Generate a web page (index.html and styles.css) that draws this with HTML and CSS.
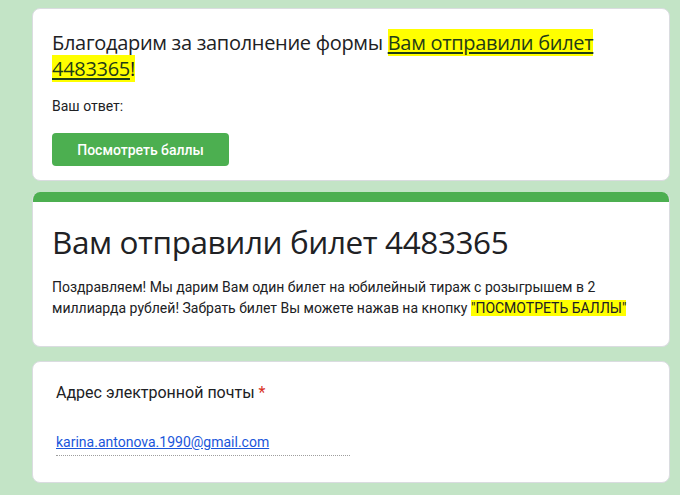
FILE: index.html
```html
<!DOCTYPE html>
<html lang="ru">
<head>
<meta charset="utf-8">
<link rel="stylesheet" href="styles.css">
</head>
<body>
<div class="page">
  <div class="card card-thanks">
    <div class="thanks-title">Благодарим за заполнение формы <a class="mark link">Вам отправили билет </a><br><span class="mark"><a class="link">4483365</a>!</span></div>
    <div class="answer-label">Ваш ответ:</div>
    <button class="btn">Посмотреть баллы</button>
  </div>
  <div class="card card-head">
    <div class="head-bar"></div>
    <div class="head-body">
      <h1 class="form-title">Вам отправили билет 4483365</h1>
      <p class="form-desc">Поздравляем! Мы дарим Вам один билет на юбилейный тираж с розыгрышем в 2 миллиарда рублей! Забрать билет Вы можете нажав на кнопку <span class="mark">"ПОСМОТРЕТЬ БАЛЛЫ"</span></p>
    </div>
  </div>
  <div class="card card-question">
    <div class="q-label">Адрес электронной почты <span class="req">*</span></div>
    <div class="q-answer"><a class="email">karina.antonova.1990@gmail.com</a></div>
  </div>
</div>
</body>
</html>
```

FILE: styles.css
```css
html, body {
  margin: 0;
  padding: 0;
  background: #c3e4c6;
}
body {
  font-family: Roboto, "Liberation Sans", sans-serif;
  color: #202124;
  width: 680px;
  height: 495px;
  overflow: hidden;
}
.page {
  padding: 8px 10px 0 32px;
  display: flex;
  flex-direction: column;
}
.card {
  background: #fff;
  border: 1px solid #dadce0;
  border-radius: 8px;
  overflow: hidden;
}
.card-thanks {
  height: 171px;
  padding: 0 19px;
}
.thanks-title {
  font-family: "Open Sans", Roboto, sans-serif;
  font-size: 20px;
  line-height: 26px;
  margin-top: 21px;
  letter-spacing: -0.3px;
}
.mark {
  background: #ffff00;
}
.link {
  color: #1f3d17;
  text-decoration: underline;
  text-decoration-thickness: 2px;
  text-underline-offset: 2px;
}
.answer-label {
  font-size: 14px;
  line-height: 20px;
  margin-top: 14px;
}
.btn {
  margin-top: 17px;
  width: 177px;
  height: 33px;
  background: #4caf50;
  color: #fff;
  border: none;
  border-radius: 4px;
  font-family: Roboto, sans-serif;
  font-weight: 500;
  font-size: 14px;
  display: block;
}
.card-head {
  margin-top: 11px;
  height: 154px;
  border-top: none;
}
.head-bar {
  height: 10px;
  background: #4caf50;
}
.head-body {
  padding: 0 19px;
}
.form-title {
  margin: 20px 0 0;
  font-family: "Open Sans", Roboto, sans-serif;
  font-weight: 400;
  font-size: 31.5px;
  line-height: 40px;
  letter-spacing: -0.4px;
}
.form-desc {
  margin: 15px 0 0;
  font-size: 14px;
  line-height: 21px;
}
.card-question {
  margin-top: 14px;
  height: 120px;
  padding: 0 23px;
}
.q-label {
  font-size: 16px;
  line-height: 24px;
  margin-top: 19px;
}
.req {
  color: #d93025;
}
.q-answer {
  margin-top: 27px;
  width: 294px;
  border-bottom: 1px dotted #9e9e9e;
  padding-bottom: 3px;
}
.email {
  color: #1a56db;
  text-decoration: underline;
  font-size: 14px;
  line-height: 20px;
}
```
